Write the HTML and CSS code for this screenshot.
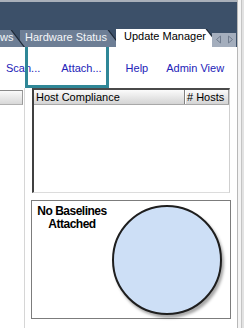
FILE: index.html
```html
<!DOCTYPE html>
<html>
<head>
<meta charset="utf-8">
<link rel="stylesheet" href="styles.css">
</head>
<body>
<div class="page">
  <div class="main">
    <div class="top">
      <div class="tabs">
        <div class="tab tab-ws"><div class="face">ws</div></div>
        <div class="tab tab-hw"><div class="face">Hardware Status</div></div>
        <div class="tab tab-active"><div class="face">Update Manager</div></div>
        <div class="tab-arrows">
          <svg width="24" height="14" viewBox="0 0 24 14">
            <polygon points="8.5,3 8.5,10 4.5,6.5" fill="none" stroke="#6f7b8d" stroke-width="1"/>
            <polygon points="16.5,3 16.5,10 20.5,6.5" fill="none" stroke="#6f7b8d" stroke-width="1"/>
          </svg>
        </div>
      </div>
    </div>
    <div class="toolbar">
      <a class="link l-scan">Scan...</a>
      <a class="link l-attach">Attach...</a>
      <a class="link l-help">Help</a>
      <a class="link l-admin">Admin View</a>
    </div>
    <div class="content">
      <div class="leftpane">
        <div class="lp-head"></div>
      </div>
      <div class="center">
        <div class="table">
          <div class="thead">
            <div class="th th-comp">Host Compliance</div>
            <div class="th th-hosts"># Hosts</div>
          </div>
        </div>
        <div class="chart">
          <div class="msg">No Baselines<br>Attached</div>
          <div class="circle"></div>
        </div>
      </div>
    </div>
  </div>
  <div class="strip"></div>
  <div class="highlight"></div>
</div>
</body>
</html>
```

FILE: styles.css
```css
html, body {
  margin: 0;
  padding: 0;
  background: #ffffff;
}
body {
  width: 244px;
  height: 328px;
  overflow: hidden;
  font-family: "Liberation Sans", Arial, sans-serif;
  font-size: 11px;
}
.page {
  position: relative;
  display: flex;
  width: 244px;
  height: 328px;
}
.main {
  width: 237px;
  display: flex;
  flex-direction: column;
}
.top {
  height: 47px;
  box-sizing: border-box;
  background: #3c5069;
  border-top: 2px solid #a9b0ba;
  display: flex;
  flex-direction: column;
  justify-content: flex-end;
}
.tabs {
  display: flex;
  align-items: flex-end;
  height: 18px;
}
.tab {
  position: relative;
  height: 17px;
  background: #1f2a38;
  clip-path: polygon(0 0, calc(100% - 13px) 0, 100% 100%, 0 100%);
}
.tab .face {
  height: 100%;
  box-sizing: border-box;
  background: #6d7e95;
  color: #f4f6f9;
  line-height: 14px;
  white-space: nowrap;
  clip-path: polygon(0 0, calc(100% - 14.5px) 0, calc(100% - 1.5px) 100%, 0 100%);
}
.tab-ws {
  width: 25px;
  z-index: 2;
}
.tab-ws .face {
  padding-left: 0;
}
.tab-hw {
  width: 102px;
  margin-left: -5px;
  z-index: 1;
}
.tab-hw .face {
  padding-left: 5px;
}
.tab-active {
  width: 105px;
  height: 18px;
  margin-left: -6px;
  z-index: 3;
  clip-path: polygon(0 0, calc(100% - 14px) 0, 100% 100%, 0 100%);
}
.tab-active .face {
  background: #ffffff;
  color: #000000;
  padding-left: 8px;
  line-height: 15px;
  clip-path: polygon(0 0, calc(100% - 15.5px) 0, calc(100% - 1.5px) 100%, 0 100%);
}
.tab-arrows {
  position: relative;
  z-index: 4;
  width: 24px;
  height: 14px;
  margin-left: -9px;
  background: #a4aebd;
}
.tab-arrows svg {
  display: block;
}
.toolbar {
  height: 41px;
  box-sizing: border-box;
  padding-top: 15px;
  padding-left: 6px;
  display: flex;
  align-items: flex-start;
}
.link {
  color: #2222b8;
  line-height: 13px;
  white-space: nowrap;
}
.l-attach { margin-left: 21px; }
.l-help { margin-left: 24px; }
.l-admin { margin-left: 18px; }
.content {
  flex: 1;
  display: flex;
}
.leftpane {
  width: 24px;
  border-right: 1px solid #d6d6d6;
}
.lp-head {
  width: 23px;
  height: 15px;
  margin-top: 2px;
  box-sizing: border-box;
  border-top: 1px solid #8a8a8a;
  border-right: 1px solid #9a9a9a;
  border-bottom: 1px solid #b0b0b0;
  background: linear-gradient(#fafafa, #d8d8d8);
}
.center {
  width: 200px;
  margin-left: 6px;
  display: flex;
  flex-direction: column;
}
.table {
  height: 105px;
  margin: 0 1px;
  box-sizing: border-box;
  border-top: 2px solid #4a4a4a;
  border-left: 2px solid #404040;
  border-right: 1px solid #cfcfcf;
  border-bottom: 1px solid #dcdcdc;
}
.thead {
  display: flex;
  height: 15px;
  box-sizing: border-box;
  border-bottom: 1px solid #a8a8a8;
  background: linear-gradient(#fbfbfb, #d4d4d4);
}
.th {
  line-height: 14px;
  color: #000;
  white-space: nowrap;
}
.th-comp {
  flex: 1;
  padding-left: 2px;
}
.th-hosts {
  width: 45px;
  box-sizing: border-box;
  padding-left: 2px;
  border-left: 1px solid #808080;
  border-right: 1px solid #9a9a9a;
  box-shadow: inset 1px 0 0 #ffffff;
}
.chart {
  height: 119px;
  margin-top: 7px;
  box-sizing: border-box;
  border: 1px solid #7c7c7c;
  display: flex;
  align-items: flex-start;
}
.msg {
  width: 80px;
  padding-top: 4px;
  text-align: center;
  font-size: 12px;
  font-weight: bold;
  line-height: 13px;
  letter-spacing: -0.5px;
  color: #000;
}
.circle {
  width: 110px;
  height: 110px;
  margin-top: 4px;
  box-sizing: border-box;
  border-radius: 50%;
  border: 2px solid #1e1e1e;
  background: #cddff6;
  box-shadow: 2px 3px 3px rgba(0, 0, 0, 0.35);
}
.strip {
  flex: 1;
  border-left: 1px solid #b8b8b8;
  background: linear-gradient(to right, #f4f4f4 0, #f4f4f4 3px, #c4c4c4 3px, #c4c4c4 4px, #e2e2e2 4px);
}
.highlight {
  position: absolute;
  left: 25px;
  top: 41px;
  width: 84px;
  height: 47px;
  box-sizing: border-box;
  border: 3px solid #2f8797;
}
```
